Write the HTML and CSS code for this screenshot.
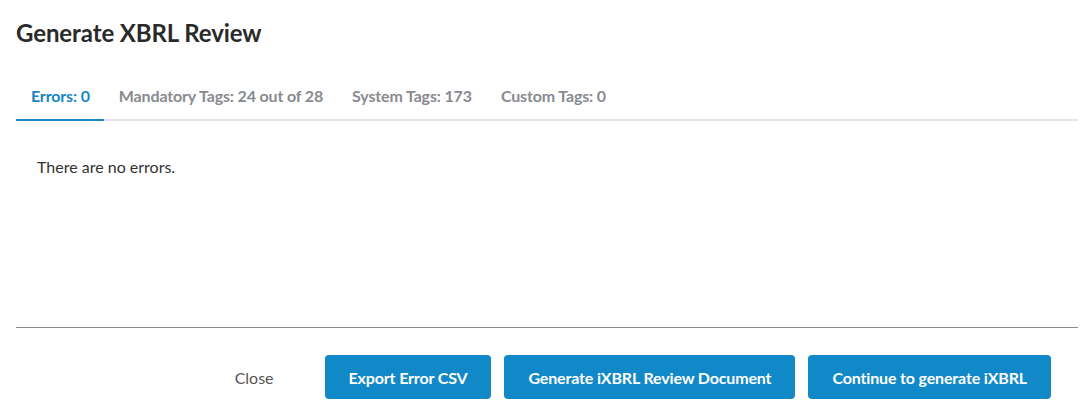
FILE: index.html
```html
<!DOCTYPE html>
<html lang="en">
<head>
  <meta charset="UTF-8">
  <title>Generate XBRL Review</title>
  <meta name="viewport" content="width=device-width, initial-scale=1.0">
  <link rel="stylesheet" href="styles.css">
</head>
<body>

  <div class="modal">
    <h2 class="modal-title">Generate XBRL Review</h2>

    <!-- Tabs -->
    <div class="tabs">
      <div class="tab active">Errors: 0</div>
      <div class="tab">Mandatory Tags: 24 out of 28</div>
      <div class="tab">System Tags: 173</div>
      <div class="tab">Custom Tags: 0</div>
    </div>

    <div class="tab-content">
      <p>There are no errors.</p>
    </div>

    <!-- Footer actions -->
    <div class="modal-footer">
      <button class="btn-link">Close</button>
      <button class="btn">Export Error CSV</button>
      <button class="btn">Generate iXBRL Review Document</button>
      <button class="btn">Continue to generate iXBRL</button>
    </div>
  </div>

</body>
</html>
```

FILE: styles.css
```css
body {
  font-family: Lato, "Open Sans", Arial, sans-serif;
  background: #fff;
  margin: 0;
  padding: 0;
}

.modal {
  padding: 0 7px 0 16px;
}

.modal-title {
  margin: 0;
  padding-top: 18px;
  font-size: 24px;
  line-height: 30px;
  font-weight: 700;
  letter-spacing: -0.1px;
  color: #2a2a2a;
}

.tabs {
  display: flex;
  margin-top: 27px;
  border-bottom: 2px solid #e4e4ea;
}

.tab {
  padding: 11px 14px 13px 15px;
  font-size: 16px;
  line-height: 20px;
  font-weight: 700;
  letter-spacing: -0.15px;
  color: #878a90;
  cursor: pointer;
  margin-bottom: -2px;
  border-bottom: 2px solid transparent;
}

.tab.active {
  color: #1a86c4;
  border-bottom-color: #1a86c4;
}

.tab-content {
  height: 206px;
  box-sizing: border-box;
  padding: 36px 21px 0;
}

.tab-content p {
  margin: 0;
  font-size: 16px;
  line-height: 20px;
  color: #333;
}

.modal-footer {
  display: flex;
  justify-content: flex-end;
  align-items: center;
  gap: 13px;
  border-top: 1px solid #8a8a8a;
  padding: 27px 27px 0 0;
}

button {
  font-family: inherit;
  font-size: 16px;
  height: 44px;
  border: none;
  cursor: pointer;
}

.btn {
  background-color: #1189c8;
  color: #fff;
  font-weight: 700;
  letter-spacing: -0.15px;
  padding: 0 24px;
  border-radius: 4px;
}

.btn:hover { background-color: #0b73aa; }

.btn-link {
  background: none;
  color: #555;
  padding: 0 38px;
}
```
